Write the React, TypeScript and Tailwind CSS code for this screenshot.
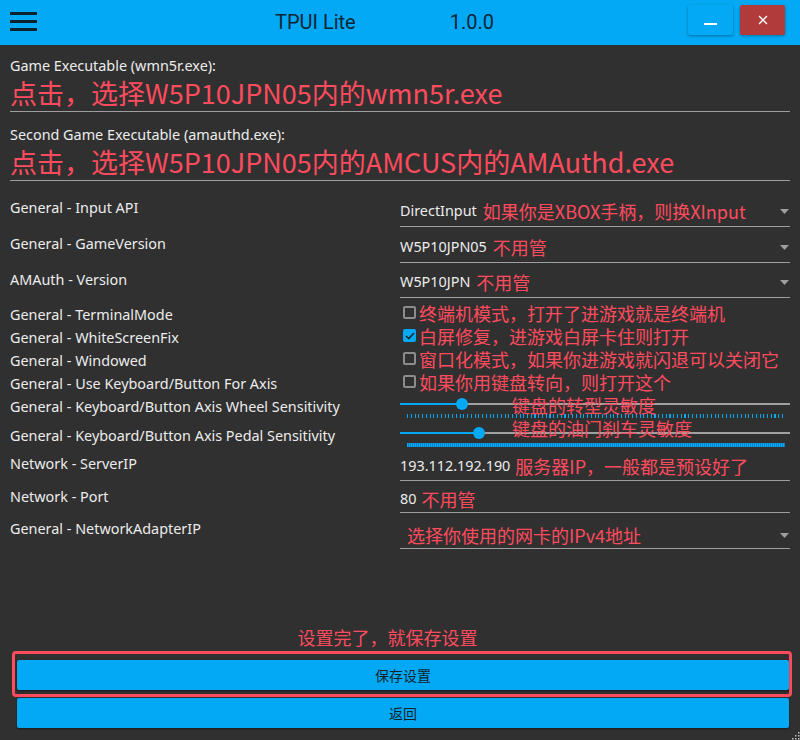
import React from 'react';

const RED = "text-[#ff4b5e] font-['Noto_Sans_CJK_SC','Noto_Sans',sans-serif]";
const LABEL = 'relative top-[2px] text-[14.4px] leading-[20px] text-[#ececec]';

function TitleBar() {
  return (
    <header className="h-[45px] shrink-0 bg-[#03a9f4] flex items-start">
      <div className="ml-[10px] mt-[12px] w-[27px] flex flex-col gap-[5px]">
        <span className="h-[3px] bg-[#0b2230]" />
        <span className="h-[3px] bg-[#0b2230]" />
        <span className="h-[3px] bg-[#0b2230]" />
      </div>
      <h1 className="ml-[238px] mt-[9px] text-[20px] leading-[26px] text-[#0a2535] font-['Roboto',sans-serif]">TPUI Lite</h1>
      <span className="ml-[94px] mt-[9px] text-[20px] leading-[26px] text-[#0a2535] font-['Roboto',sans-serif]">1.0.0</span>
      <div className="flex-1" />
      <button className="mt-[5px] w-[45px] h-[30px] rounded-[2px] bg-[#03a9f4] shadow-[0_1px_3px_rgba(0,0,0,0.35)] flex items-center justify-center">
        <span className="mt-[8px] w-[13px] h-[2px] bg-white" />
      </button>
      <button className="ml-[7px] mr-[15px] mt-[5px] w-[45px] h-[30px] rounded-[2px] bg-[#b13a3b] shadow-[0_1px_3px_rgba(0,0,0,0.35)] flex items-center justify-center">
        <svg width="10" height="10" viewBox="0 0 10 10">
          <path d="M1 1L9 9M9 1L1 9" stroke="white" strokeWidth="1.4" />
        </svg>
      </button>
    </header>
  );
}

function FileField({ label, hint, className }: any) {
  return (
    <div className={className}>
      <div className={LABEL}>{label}</div>
      <div className={`h-[38px] leading-[38px] text-[27px] border-b border-[#9e9e9e] ${RED}`}>{hint}</div>
    </div>
  );
}

function Arrow() {
  return (
    <svg width="9" height="5" viewBox="0 0 9 5" className="ml-auto mr-[1px] mb-[9px]">
      <path d="M0 0H9L4.5 5Z" fill="#9e9e9e" />
    </svg>
  );
}

function SelectRow({ value, hint }: any) {
  return (
    <div className="flex-1 h-full border-b border-[#9e9e9e] flex items-end pb-[3px]">
      <span className="text-[14.4px] leading-[24px] text-[#ececec]">{value}</span>
      <span className={`ml-[6px] text-[18px] leading-[24px] ${RED}`}>{hint}</span>
      <Arrow />
    </div>
  );
}

function Check({ checked, hint }: any) {
  return (
    <div className="flex-1 flex items-center">
      {checked ? (
        <span className="ml-[3px] w-[13px] h-[13px] rounded-[2px] bg-[#03a9f4] flex items-center justify-center">
          <svg width="10" height="8" viewBox="0 0 10 8">
            <path d="M1 4L3.8 6.6L9 1" stroke="#1c2a30" strokeWidth="1.6" fill="none" />
          </svg>
        </span>
      ) : (
        <span className="ml-[3px] w-[13px] h-[13px] rounded-[2px] border-2 border-[#8c8c8c]" />
      )}
      <span className={`ml-[3px] text-[18px] leading-[20px] ${RED}`}>{hint}</span>
    </div>
  );
}

function Slider({ pos, dense }: any) {
  return (
    <div className="flex-1 relative">
      <div className="mt-[10px] h-[2px] flex items-center">
        <div className="h-[2px] bg-[#03a9f4]" style={{ width: pos }} />
        <div className="w-[12px] h-[12px] -ml-[6px] -mr-[6px] rounded-full bg-[#03a9f4] relative z-10" />
        <div className="flex-1 h-[2px] bg-[#a0a0a0]" />
      </div>
      <div
        className={`ml-[7px] mr-[5px] mt-[9px] h-[4px] ${
          dense
            ? 'bg-[repeating-linear-gradient(90deg,#03a9f4_0_1px,#0b82bb_1px_2px)]'
            : 'bg-[repeating-linear-gradient(90deg,#03a9f4_0_1.2px,transparent_1.2px_3.75px)]'
        }`}
      />
    </div>
  );
}

export default function App() {
  return (
    <div className="w-[800px] h-[740px] bg-[#303030] flex flex-col overflow-hidden relative font-['Noto_Sans','Noto_Sans_CJK_SC',sans-serif]">
      <TitleBar />

      <main className="flex-1 px-[10px] flex flex-col">
        <FileField className="mt-[9px]" label="Game Executable (wmn5r.exe):" hint="点击，选择W5P10JPN05内的wmn5r.exe" />
        <FileField className="mt-[11px]" label="Second Game Executable (amauthd.exe):" hint="点击，选择W5P10JPN05内的AMCUS内的AMAuthd.exe" />

        <div className="mt-[8px] flex h-[38px]">
          <div className={`w-[390px] pt-[7px] ${LABEL}`}>General - Input API</div>
          <SelectRow value="DirectInput" hint="如果你是XBOX手柄，则换XInput" />
        </div>
        <div className="flex h-[36px]">
          <div className={`w-[390px] pt-[5px] ${LABEL}`}>General - GameVersion</div>
          <SelectRow value="W5P10JPN05" hint="不用管" />
        </div>
        <div className="flex h-[35px]">
          <div className={`w-[390px] pt-[5px] ${LABEL}`}>AMAuth - Version</div>
          <SelectRow value="W5P10JPN" hint="不用管" />
        </div>

        <div className="mt-[3px] flex h-[23px] items-center">
          <div className={`w-[390px] ${LABEL}`}>General - TerminalMode</div>
          <Check hint="终端机模式，打开了进游戏就是终端机" />
        </div>
        <div className="flex h-[23px] items-center">
          <div className={`w-[390px] ${LABEL}`}>General - WhiteScreenFix</div>
          <Check checked hint="白屏修复，进游戏白屏卡住则打开" />
        </div>
        <div className="flex h-[23px] items-center">
          <div className={`w-[390px] ${LABEL}`}>General - Windowed</div>
          <Check hint="窗口化模式，如果你进游戏就闪退可以关闭它" />
        </div>
        <div className="flex h-[23px] items-center">
          <div className={`w-[390px] ${LABEL}`}>General - Use Keyboard/Button For Axis</div>
          <Check hint="如果你用键盘转向，则打开这个" />
        </div>

        <div className="flex h-[29px] relative">
          <div className={`w-[390px] pt-[2px] ${LABEL}`}>General - Keyboard/Button Axis Wheel Sensitivity</div>
          <Slider pos={62} />
          <span className={`absolute left-[502px] top-[1px] text-[18px] leading-[22px] ${RED}`}>键盘的转型灵敏度</span>
        </div>
        <div className="flex h-[29px] relative">
          <div className={`w-[390px] pt-[2px] ${LABEL}`}>General - Keyboard/Button Axis Pedal Sensitivity</div>
          <Slider pos={79} dense />
          <span className={`absolute left-[502px] -top-[5px] text-[18px] leading-[22px] ${RED}`}>键盘的油门刹车灵敏度</span>
        </div>

        <div className="flex h-[30px]">
          <div className={`w-[390px] pt-[1px] ${LABEL}`}>Network - ServerIP</div>
          <div className="flex-1 border-b border-[#9e9e9e] flex items-end pb-[2px]">
            <span className="text-[14.4px] leading-[24px] text-[#ececec]">193.112.192.190</span>
            <span className={`ml-[5px] text-[18px] leading-[24px] ${RED}`}>服务器IP，一般都是预设好了</span>
          </div>
        </div>
        <div className="flex h-[32px]">
          <div className={`w-[390px] pt-[4px] ${LABEL}`}>Network - Port</div>
          <div className="flex-1 border-b border-[#9e9e9e] flex items-end pb-[1px]">
            <span className="text-[14.4px] leading-[24px] text-[#ececec]">80</span>
            <span className={`ml-[5px] text-[18px] leading-[24px] ${RED}`}>不用管</span>
          </div>
        </div>
        <div className="flex h-[36px]">
          <div className={`w-[390px] pt-[4px] ${LABEL}`}>General - NetworkAdapterIP</div>
          <div className="flex-1 border-b border-[#9e9e9e] flex items-end pb-[1px]">
            <span className={`ml-[7px] text-[18px] leading-[24px] ${RED}`}>选择你使用的网卡的IPv4地址</span>
            <Arrow />
          </div>
        </div>
      </main>

      <footer className="shrink-0 flex flex-col pb-[12px]">
        <div className={`h-[20px] leading-[20px] text-[18px] text-center pr-[25px] ${RED}`}>设置完了，就保存设置</div>
        <div className="mt-[4px] ml-[12px] mr-[8px] h-[46px] border-[3px] border-[#ff4b5e] rounded-[4px] pl-[2px] pt-[6px]">
          <button className="w-full h-[30px] rounded-[2px] bg-[#03a9f4] shadow-[0_1px_2px_rgba(0,0,0,0.4)] text-[14px] text-[#13232c] font-['Noto_Sans_CJK_SC',sans-serif]">保存设置</button>
        </div>
        <button className="mt-[1px] ml-[17px] mr-[11px] h-[30px] rounded-[2px] bg-[#03a9f4] shadow-[0_1px_2px_rgba(0,0,0,0.4)] text-[14px] text-[#13232c] font-['Noto_Sans_CJK_SC',sans-serif]">返回</button>
      </footer>

      <svg width="10" height="10" viewBox="0 0 10 10" className="absolute right-0 bottom-0">
        <rect x="8" y="2" width="1.5" height="1.5" fill="#bdbdbd" />
        <rect x="5" y="5" width="1.5" height="1.5" fill="#bdbdbd" />
        <rect x="8" y="5" width="1.5" height="1.5" fill="#bdbdbd" />
        <rect x="2" y="8" width="1.5" height="1.5" fill="#bdbdbd" />
        <rect x="5" y="8" width="1.5" height="1.5" fill="#bdbdbd" />
        <rect x="8" y="8" width="1.5" height="1.5" fill="#bdbdbd" />
      </svg>
    </div>
  );
}
